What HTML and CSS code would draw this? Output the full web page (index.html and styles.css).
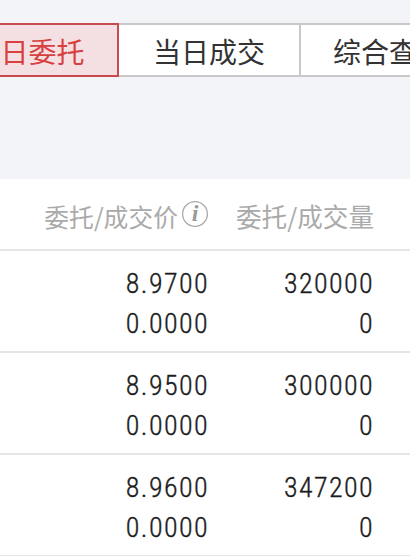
FILE: index.html
```
<!DOCTYPE html>
<html lang="zh-CN">
<head>
  <meta charset="UTF-8" />
  <title>当日委托</title>
  <link rel="stylesheet" href="styles.css">
</head>
<body>
  <div class="tabs">
    <div class="tab active">当日委托</div>
    <div class="tab">当日成交</div>
    <div class="tab last">综合查询</div>
  </div>

  <div class="orders">
    <div class="row head">
      <div class="price">
        <span>委托/成交价</span>
        <svg class="info" width="28" height="28" viewBox="0 0 28 28">
          <circle cx="14" cy="14" r="12.4" fill="none" stroke="#aaa" stroke-width="1.3" />
          <text x="14" y="21" text-anchor="middle">i</text>
        </svg>
      </div>
      <div class="amount">委托/成交量</div>
    </div>
    <div class="row">
      <div class="price">8.9700<br>0.0000</div>
      <div class="amount">320000<br>0</div>
    </div>
    <div class="row">
      <div class="price">8.9500<br>0.0000</div>
      <div class="amount">300000<br>0</div>
    </div>
    <div class="row">
      <div class="price">8.9600<br>0.0000</div>
      <div class="amount">347200<br>0</div>
    </div>
  </div>
</body>
</html>
```
FILE: styles.css
```
* {
  box-sizing: border-box;
}

body {
  margin: 0;
  height: 556px;
  overflow: hidden;
  background-color: #f2f4f8;
  font-family: "Noto Sans CJK SC", sans-serif;
}

/* the tab strip is wider than the screen */
.tabs {
  display: flex;
  width: 541px;
  margin: 23px 0 102px -62px;
}

.tab {
  flex: none;
  width: 182px;
  height: 54px;
  border: 2px solid #c9c9c9;
  border-left: none;
  background-color: white;
  color: #333;
  font-size: 28px;
  line-height: 52px;
  text-align: center;
}

.tab.active {
  width: 181px;
  border: 2px solid #c94b50;
  background-color: #f4dfe3;
  color: #d8403f;
}

.tab.last {
  width: 178px;
}

.orders {
  background-color: white;
}

.row {
  display: flex;
  height: 102px;
  padding: 13px 0 7px;
  border-bottom: 2px solid #e4e5e6;
  color: #1c1c1c;
  font-family: Roboto, sans-serif;
  font-size: 28px;
  font-weight: 300;
  font-stretch: 75%;
  line-height: 40px;
  letter-spacing: 1.4px;
  text-align: right;
  -webkit-text-stroke: 0.35px #1c1c1c;
}

.price {
  width: 209px;
}

.amount {
  width: 165px;
}

.head {
  height: 72px;
  padding: 0;
  color: #aaa;
  font-family: "Noto Sans CJK SC", sans-serif;
  font-size: 24.8px;
  font-weight: 400;
  line-height: 74px;
  letter-spacing: 0;
  -webkit-text-stroke: 0;
}

.head .price {
  display: flex;
  justify-content: flex-end;
}

.head .amount {
  font-size: 25.6px;
}

.info {
  margin: 21px 0 0 3px;
}

.info text {
  fill: #999;
  font: italic bold 24px "Liberation Serif", serif;
}
```
